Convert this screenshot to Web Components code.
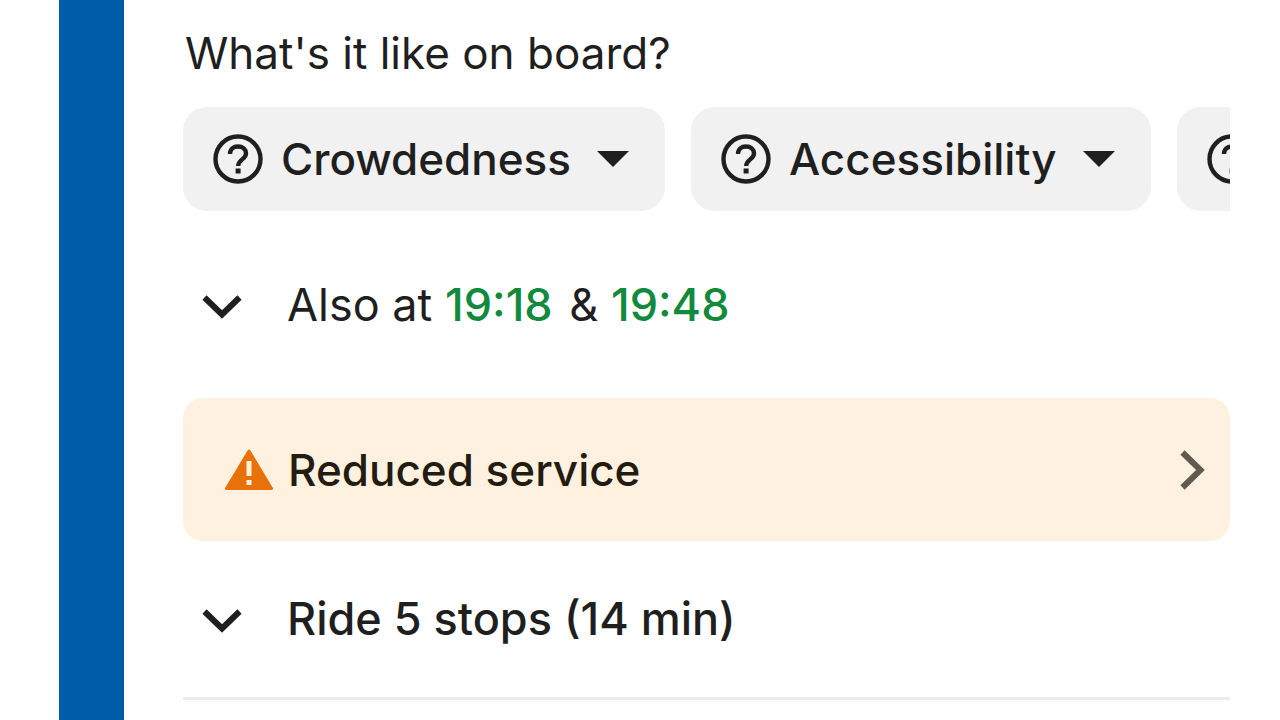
<!DOCTYPE html>
<html lang="en">
<head>
<meta charset="utf-8">
<meta name="viewport" content="width=device-width, initial-scale=1">
<title>Ride details</title>
<style>
body {
    margin: 0;
    background: #fff;
    color: #1f1f1f;
    font-family: Inter, "Liberation Sans", sans-serif;
    font-size: 44px;
    line-height: 56px;
}
</style>
</head>
<body>
<transit-leg>
    <board-question>
        What's it like on board?
        <filter-chip slot="chips">Crowdedness</filter-chip>
        <filter-chip slot="chips">Accessibility</filter-chip>
        <filter-chip slot="chips"></filter-chip>
    </board-question>
    <expand-row>Also at <live-time>19:18</live-time> &amp; <live-time>19:48</live-time></expand-row>
    <service-alert>Reduced service</service-alert>
    <expand-row class="ride" strong>Ride 5 stops (14 min)</expand-row>
</transit-leg>

<script>
class BaseElement extends HTMLElement {
    constructor() {
        super()
        const template = document.createElement('template')
        template.innerHTML = this.constructor.markup
        this.attachShadow({ mode: 'open' })
        .appendChild(template.content.cloneNode(true))
    }
}

// line colour on the left, leg details on the right
customElements.define('transit-leg',

class extends BaseElement {
    static markup = `
<style>
:host {
    display: flex;
    min-height: 100vh;
    padding: 0 50px 0 59px;
    overflow: hidden;
}
.line {
    flex: none;
    width: 65px;
    background: #005ca9;
}
.details {
    flex: 1;
    min-width: 0;
    margin-left: 59px;
    padding-top: 25px;
}
::slotted(.ride) {
    --row-height: 156px;
    border-bottom: 3px solid #ededed;
}
</style>
<div class="line"></div>
<div class="details"><slot></slot></div>
`
})

customElements.define('board-question',

class extends BaseElement {
    static markup = `
<style>
:host {
    display: block;
}
.title {
    padding-left: 2px;
}
.chips {
    display: flex;
    gap: 26px;
    margin-top: 26px;
    overflow: hidden;
}
</style>
<div class="title"><slot></slot></div>
<div class="chips"><slot name="chips"></slot></div>
`
})

customElements.define('filter-chip',

class extends BaseElement {
    static markup = `
<style>
:host {
    display: block;
    flex: none;
}
button {
    display: flex;
    align-items: center;
    height: 104px;
    padding: 0 36px 0 30px;
    border: 0;
    border-radius: 24px;
    background: #f1f1f1;
    color: inherit;
    font: inherit;
    font-weight: 500;
    white-space: nowrap;
}
.help {
    flex: none;
    width: 50px;
    height: 50px;
    margin-right: 18px;
}
.caret {
    flex: none;
    width: 32px;
    height: 16px;
    margin-left: 26px;
}
</style>
<button type="button">
    <svg class="help" viewBox="0 0 50 50" fill="none" stroke="currentColor" aria-hidden="true">
        <circle cx="25" cy="25" r="22.5" stroke-width="4.4"/>
        <path d="M17 20C17 15 20.5 12.5 25 12.5C29.7 12.5 33 15.4 33 19.4C33 25.3 25.2 25.5 25.2 32" stroke-width="4.4"/>
        <rect x="22.6" y="34.5" width="5" height="5" fill="currentColor" stroke="none"/>
    </svg>
    <slot></slot>
    <svg class="caret" viewBox="0 0 32 16" fill="currentColor" aria-hidden="true">
        <path d="M0 0H32L16 16Z"/>
    </svg>
</button>
`
})

customElements.define('expand-row',

class extends BaseElement {
    static markup = `
<style>
:host {
    display: block;
    font-size: 45px;
}
button {
    display: flex;
    align-items: center;
    width: 100%;
    height: var(--row-height, 187px);
    padding: 0 0 0 19px;
    border: 0;
    background: none;
    color: inherit;
    font: inherit;
    text-align: left;
}
:host([strong]) button {
    font-weight: 500;
}
svg {
    flex: none;
    width: 40px;
    height: 24px;
    margin-top: 4px;
    margin-right: 45px;
}
</style>
<button type="button" aria-expanded="false">
    <svg viewBox="0 0 40 24" fill="none" stroke="currentColor" stroke-width="6" aria-hidden="true">
        <path d="M2.5 2.5L20 19.5L37.5 2.5"/>
    </svg>
    <span><slot></slot></span>
</button>
`
})

customElements.define('live-time',

class extends BaseElement {
    static markup = `
<style>
:host {
    margin-right: 4px;
    color: #118a3e;
    font-weight: 500;
}
</style>
<slot></slot>`
})

customElements.define('service-alert',

class extends BaseElement {
    static markup = `
<style>
:host {
    display: block;
}
button {
    display: flex;
    align-items: center;
    width: 100%;
    height: 143px;
    padding: 0 25px 0 41px;
    border: 0;
    border-radius: 20px;
    background: #fef1e0;
    color: #241c10;
    font: inherit;
    font-weight: 500;
    text-align: left;
}
.label {
    flex: 1;
}
.warning {
    flex: none;
    width: 50px;
    height: 42px;
    margin-right: 14px;
}
.arrow {
    flex: none;
    width: 25px;
    height: 40px;
}
</style>
<button type="button">
    <svg class="warning" viewBox="0 0 50 42" aria-hidden="true">
        <path d="M25 2L47.5 39.5H2.5Z" fill="#e8710a" stroke="#e8710a" stroke-width="3" stroke-linejoin="round"/>
        <path d="M25 12V27M25 31V36" stroke="#fef1e0" stroke-width="5"/>
    </svg>
    <span class="label"><slot></slot></span>
    <svg class="arrow" viewBox="0 0 25 40" fill="none" stroke="#625a4c" stroke-width="6" aria-hidden="true">
        <path d="M2.5 2.5L20.5 20L2.5 37.5"/>
    </svg>
</button>
`
})
</script>
</body>
</html>
